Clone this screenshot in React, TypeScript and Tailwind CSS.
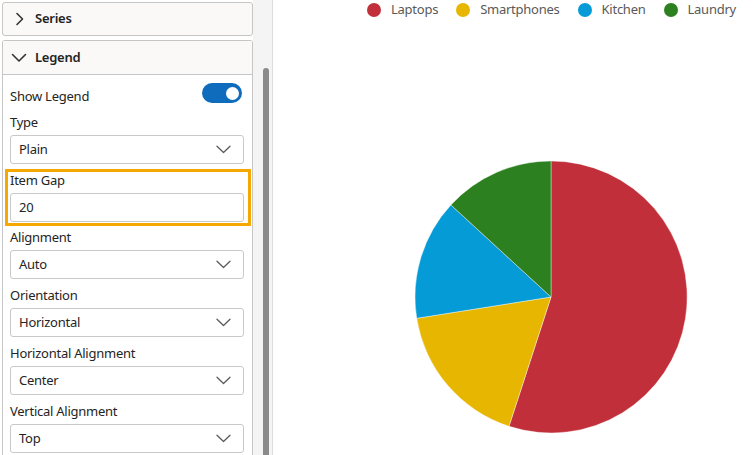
import React from "react";

const font = { fontFamily: '"Noto Sans", "Open Sans", Arial, sans-serif' };

const Chevron = () => (
    <svg width="15" height="9" viewBox="0 0 15 9" fill="none" className="shrink-0">
        <path d="M1 1.2l6.5 6.3L14 1.2" stroke="#5b5b5b" strokeWidth="1.3" strokeLinecap="round" strokeLinejoin="round" />
    </svg>
);

const Select = ({ value }: { value: string }) => (
    <div className="flex h-[29px] items-center justify-between rounded-[3px] border border-[#c9c9c9] bg-white pl-[8px] pr-[12px] text-[13px] text-[#242424]">
        <span>{value}</span>
        <Chevron />
    </div>
);

const Field = ({ label, children, highlight }: { label: string; children: React.ReactNode; highlight?: boolean }) => (
    <div className="relative">
        <div className="h-[22px] text-[13px] leading-[18px] text-[#242424]">{label}</div>
        {children}
        {highlight && (
            <div className="pointer-events-none absolute -top-[2px] -bottom-[4px] -left-[5px] -right-[7px] border-[3px] border-[#f5a800]" />
        )}
    </div>
);

const slices = [
    { name: "Laptops", color: "#c1303a", d: "M278 277 L278 141 A136 136 0 1 1 236 406.3 Z" },
    { name: "Smartphones", color: "#e6b600", d: "M278 277 L236 406.3 A136 136 0 0 1 143.7 298.3 Z" },
    { name: "Kitchen", color: "#049bd7", d: "M278 277 L143.7 298.3 A136 136 0 0 1 177.9 184.9 Z" },
    { name: "Laundry", color: "#2d801f", d: "M278 277 L177.9 184.9 A136 136 0 0 1 278 141 Z" },
];

export default function App() {
    return (
        <div className="flex h-[455px] w-[753px] overflow-hidden bg-white tracking-[-0.25px]" style={font}>
            {/* property panel */}
            <div className="flex w-[253px] shrink-0 flex-col gap-[4px] pl-[2px] pt-[2px]">
                <div className="flex h-[34px] items-center rounded-[3px] border border-[#c6c6c6] bg-[#faf9f8] pl-[11px]">
                    <svg width="10" height="14" viewBox="0 0 10 14" fill="none">
                        <path d="M3 1.5l5.5 5.5L3 12.5" stroke="#333" strokeWidth="1.6" strokeLinecap="round" strokeLinejoin="round" />
                    </svg>
                    <span className="ml-[11px] text-[13px] font-semibold text-[#242424]">Series</span>
                </div>
                <div className="flex flex-1 flex-col rounded-t-[3px] border border-b-0 border-[#c6c6c6]">
                    <div className="flex h-[33px] items-center bg-[#faf9f8] pl-[8px]">
                        <svg width="16" height="10" viewBox="0 0 16 10" fill="none">
                            <path d="M1.5 1.5l6.5 6.5 6.5-6.5" stroke="#333" strokeWidth="1.6" strokeLinecap="round" strokeLinejoin="round" />
                        </svg>
                        <span className="ml-[8px] text-[13px] font-semibold text-[#242424]">Legend</span>
                    </div>
                    <div className="flex flex-col gap-[7px] border-t border-[#c6c6c6] bg-white pl-[7px] pr-[8px] pt-[8px]">
                        <div className="flex h-[23px] items-start justify-between">
                            <span className="mt-[2px] text-[13px] leading-[22px] text-[#242424]">Show Legend</span>
                            <div className="mr-[2px] flex h-[20px] w-[40px] items-center justify-end rounded-full bg-[#0f6cbd] pr-[3px]">
                                <div className="h-[13px] w-[13px] rounded-full bg-white" />
                            </div>
                        </div>
                        <Field label="Type">
                            <Select value="Plain" />
                        </Field>
                        <Field label="Item Gap" highlight>
                            <div className="flex h-[29px] items-center rounded-[3px] border border-[#c9c9c9] bg-white pl-[8px] text-[13px] text-[#242424]">
                                20
                            </div>
                        </Field>
                        <div className="-mt-[1px]">
                            <Field label="Alignment">
                                <Select value="Auto" />
                            </Field>
                        </div>
                        <Field label="Orientation">
                            <Select value="Horizontal" />
                        </Field>
                        <Field label="Horizontal Alignment">
                            <Select value="Center" />
                        </Field>
                        <Field label="Vertical Alignment">
                            <Select value="Top" />
                        </Field>
                    </div>
                </div>
            </div>

            {/* scrollbar */}
            <div className="w-[19px] shrink-0 bg-[#f4f4f4] pl-[10px] pt-[68px]">
                <div className="h-full w-[6px] rounded-t-[3px] bg-[#8a8a8a]" />
            </div>
            <div className="w-px shrink-0 bg-[#dcdcdc]" />

            {/* chart */}
            <div className="flex flex-1 flex-col">
                <div className="flex h-[20px] items-center pl-[94px] text-[13px] text-[#595959]">
                    {slices.map((s, i) => (
                        <div key={s.name} className={`flex items-center ${i > 0 ? "ml-[18px]" : ""}`}>
                            <span className="h-[14px] w-[14px] rounded-full" style={{ backgroundColor: s.color }} />
                            <span className="ml-[10px]">{s.name}</span>
                        </div>
                    ))}
                </div>
                <svg width="480" height="435" viewBox="0 0 480 435">
                    {slices.map((s) => (
                        <path key={s.name} d={s.d} fill={s.color} stroke="#ffffff" strokeWidth="0.4" strokeLinejoin="round" />
                    ))}
                </svg>
            </div>
        </div>
    );
}
